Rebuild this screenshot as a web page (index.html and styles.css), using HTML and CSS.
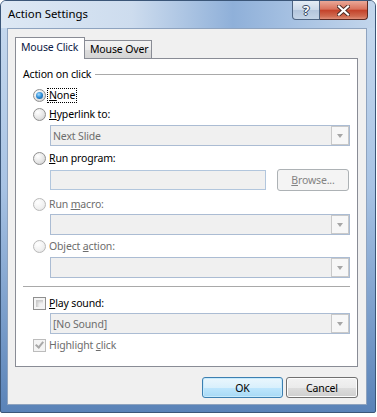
FILE: index.html
```html
<!DOCTYPE html>
<html lang="en">
<head>
    <meta charset="UTF-8">
    <title>Action Settings</title>
    <link rel="stylesheet" href="styles.css">
</head>
<body>
    <div class="window">
        <div class="titlebar">
            <span class="title">Action Settings</span>
            <div class="caption-btns">
                <span class="cap-btn help">?</span>
                <span class="cap-btn close">
                    <svg width="13" height="11" viewBox="0 0 13 11">
                        <path d="M2 1.5 L11 9.5 M11 1.5 L2 9.5" stroke="#4a2a24" stroke-width="4" stroke-linecap="square"/>
                        <path d="M2 1.5 L11 9.5 M11 1.5 L2 9.5" stroke="#fff" stroke-width="2.2" stroke-linecap="square"/>
                    </svg>
                </span>
            </div>
        </div>

        <div class="client">
            <div class="tabs">
                <span class="tab active">Mouse Click</span>
                <span class="tab">Mouse Over</span>
            </div>

            <div class="panel">
                <div class="group-title">
                    <span>Action on click</span>
                    <span class="rule"></span>
                </div>

                <div class="option opt-none">
                    <span class="radio checked"></span>
                    <span class="label focus"><u>N</u>one</span>
                </div>
                <div class="option opt-link">
                    <span class="radio"></span>
                    <span class="label"><u>H</u>yperlink to:</span>
                </div>
                <div class="combo combo-link">
                    <span class="combo-text">Next Slide</span>
                    <span class="combo-arrow"></span>
                </div>

                <div class="option opt-run">
                    <span class="radio"></span>
                    <span class="label"><u>R</u>un program:</span>
                </div>
                <div class="program-row">
                    <span class="textbox"></span>
                    <span class="browse"><u>B</u>rowse...</span>
                </div>

                <div class="option opt-macro disabled">
                    <span class="radio"></span>
                    <span class="label">Run <u>m</u>acro:</span>
                </div>
                <div class="combo combo-macro">
                    <span class="combo-text"></span>
                    <span class="combo-arrow"></span>
                </div>

                <div class="option opt-object disabled">
                    <span class="radio"></span>
                    <span class="label">Object <u>a</u>ction:</span>
                </div>
                <div class="combo combo-object">
                    <span class="combo-text"></span>
                    <span class="combo-arrow"></span>
                </div>

                <div class="separator"></div>

                <div class="option opt-sound">
                    <span class="checkbox"></span>
                    <span class="label"><u>P</u>lay sound:</span>
                </div>
                <div class="combo combo-sound">
                    <span class="combo-text">[No Sound]</span>
                    <span class="combo-arrow"></span>
                </div>

                <div class="option opt-highlight disabled">
                    <span class="checkbox checked"></span>
                    <span class="label">Highlight <u>c</u>lick</span>
                </div>
            </div>

            <div class="buttons">
                <span class="btn default">OK</span>
                <span class="btn cancel">Cancel</span>
            </div>
        </div>
    </div>
</body>
</html>
```

FILE: styles.css
```css
body {
    margin: 0;
    background: #fff;
    font-family: "Noto Sans", "DejaVu Sans", sans-serif;
    font-size: 10.5px;
    letter-spacing: -0.15px;
    color: #000;
}

.window {
    width: 374px;
    height: 411px;
    border: 1px solid #3b5678;
    border-radius: 6px 6px 2px 2px;
    background: linear-gradient(#c9dbef, #a8c3e4 45%, #5a83b8);
    display: flex;
    flex-direction: column;
}

.titlebar {
    height: 27px;
    display: flex;
    align-items: flex-start;
    background: linear-gradient(90deg, #dde8f4 0%, #cddcee 35%, #8fb0d9 62%, #a6c1e2 78%, #c3d6ec 100%);
    border-radius: 5px 5px 0 0;
}

.title {
    padding-left: 7px;
    margin-top: 5px;
    font-size: 11.4px;
    letter-spacing: 0;
    color: #000;
}

.caption-btns {
    margin-left: auto;
    margin-right: 7px;
    display: flex;
}

.cap-btn {
    height: 18px;
    display: flex;
    align-items: center;
    justify-content: center;
    border: 1px solid #4e6482;
    border-top: none;
}

.help {
    width: 26px;
    border-radius: 0 0 0 4px;
    background: linear-gradient(#e4ecf5, #cbd8e8 50%, #b3c5dc 51%, #c4d4e7);
    color: #fff;
    font-weight: bold;
    font-size: 13px;
    text-shadow: 0 0 1px #2d3c52, 1px 0 0 #3a4d68, -1px 0 0 #3a4d68, 0 1px 0 #3a4d68, 0 -1px 0 #3a4d68;
}

.close {
    width: 47px;
    border-left: none;
    border-color: #5c2a22;
    border-radius: 0 0 4px 0;
    background: linear-gradient(#eaa898, #d9735d 45%, #c4432b 52%, #cf6a50 85%, #e0907a);
}

.client {
    margin-left: 6px;
    width: 360px;
    height: 377px;
    box-sizing: border-box;
    border: 1px solid #8ea3bf;
    background: #f0f0f0;
    padding: 8px 8px 0 7px;
    display: flex;
    flex-direction: column;
}

.tabs {
    height: 21px;
    display: flex;
    align-items: flex-end;
}

.tab {
    box-sizing: border-box;
    border: 1px solid #898c95;
    border-bottom: none;
    padding-left: 5px;
    white-space: nowrap;
    color: #000;
}

.tab.active {
    width: 70px;
    height: 22px;
    margin-bottom: -1px;
    padding-top: 2px;
    background: #fff;
    position: relative;
    z-index: 1;
    color: #0c1a45;
}

.tab:not(.active) {
    width: 68px;
    height: 18px;
    margin-left: -1px;
    padding-top: 1px;
    background: linear-gradient(#f3f3f3, #ebebeb 50%, #dddddd 51%, #d5d5d5);
}

.panel {
    height: 309px;
    box-sizing: border-box;
    border: 1px solid #898c95;
    background: #fff;
    padding: 0 7px;
    display: flex;
    flex-direction: column;
}

.group-title {
    margin-top: 8px;
    height: 14px;
    display: flex;
    align-items: center;
}

.rule {
    flex: 1;
    height: 1px;
    margin-left: 4px;
    background: #a9a9a9;
}

.option {
    height: 16px;
    margin-left: 10px;
    display: flex;
    align-items: center;
}

.option .label {
    margin-left: 3px;
}

.option.disabled .label {
    color: #6d6d6d;
}

.focus {
    outline: 1px dotted #000;
    outline-offset: 0;
    padding: 0 1px;
    margin-left: 2px !important;
    line-height: 13px;
}

.opt-none { margin-top: 6px; }
.opt-link { margin-top: 3px; }
.combo-link { margin-top: 3px; }
.opt-run { margin-top: 4px; }
.program-row { margin-top: 3px; }
.opt-macro { margin-top: 5px; }
.combo-macro { margin-top: 2px; }
.opt-object { margin-top: 3px; }
.combo-object { margin-top: 3px; }
.opt-sound { margin-top: 8px; }
.combo-sound { margin-top: 2px; }
.opt-highlight { margin-top: 3px; }

.radio {
    width: 13px;
    height: 13px;
    box-sizing: border-box;
    border-radius: 50%;
    border: 1px solid #8f8f8f;
    background: radial-gradient(circle at 35% 30%, #ffffff, #e6e6e6 55%, #c9c9c9);
    display: flex;
    align-items: center;
    justify-content: center;
}

.radio.checked::after {
    content: "";
    width: 7px;
    height: 7px;
    border-radius: 50%;
    background: radial-gradient(circle at 40% 35%, #a5dcff, #2a8ad4 50%, #10508f);
}

.disabled .radio {
    border-color: #b9b9b9;
    background: radial-gradient(circle at 35% 30%, #ffffff, #f0f0f0 60%, #dcdcdc);
}

.checkbox {
    width: 13px;
    height: 13px;
    box-sizing: border-box;
    border: 1px solid #8f8f8f;
    background: #f4f4f4;
    box-shadow: inset 0 0 0 2px #f4f4f4, inset 2px 2px 3px 2px #c8c8c8;
    display: flex;
    align-items: center;
    justify-content: center;
}

.disabled .checkbox {
    border-color: #bcbcbc;
    box-shadow: none;
    background: #f4f4f4;
}

.checkbox.checked::after {
    content: "";
    width: 3px;
    height: 6px;
    margin-top: -2px;
    border: solid #a8a8a8;
    border-width: 0 2px 2px 0;
    transform: rotate(40deg);
}

.combo {
    margin-left: 27px;
    height: 21px;
    box-sizing: border-box;
    border: 1px solid #abbcd3;
    background: #f0f0f0;
    display: flex;
    align-items: center;
}

.combo-text {
    flex: 1;
    padding-left: 2px;
    color: #6d6d6d;
}

.combo-arrow {
    width: 18px;
    height: 19px;
    box-sizing: border-box;
    border: 1px solid #c9c9c9;
    background: #f7f7f7;
    display: flex;
    align-items: center;
    justify-content: center;
}

.combo-arrow::after {
    content: "";
    border-left: 3.5px solid transparent;
    border-right: 3.5px solid transparent;
    border-top: 4px solid #a6a6a6;
}

.program-row {
    height: 22px;
    margin-left: 27px;
    display: flex;
    align-items: center;
}

.textbox {
    width: 216px;
    height: 20px;
    box-sizing: border-box;
    border: 1px solid #b2c6dd;
    background: #f0f0f0;
}

.browse {
    width: 72px;
    height: 22px;
    margin-left: 11px;
    box-sizing: border-box;
    border: 1px solid #adb2b5;
    border-radius: 3px;
    background: #f4f4f4;
    color: #838383;
    display: flex;
    align-items: center;
    justify-content: center;
}

.separator {
    margin-top: 8px;
    height: 1px;
    background: #a9a9a9;
}

.buttons {
    margin-top: 10px;
    display: flex;
    justify-content: flex-end;
    gap: 3px;
}

.btn {
    height: 21px;
    box-sizing: border-box;
    border-radius: 3px;
    display: flex;
    align-items: center;
    justify-content: center;
}

.btn.default {
    width: 81px;
    border: 1px solid #3c7fb1;
    background: linear-gradient(#eaf6fd, #d9f0fc 50%, #bee6fd 51%, #a7d9f5);
    box-shadow: inset 0 0 0 1px #c6eafc;
}

.btn.cancel {
    width: 72px;
    border: 1px solid #707070;
    background: linear-gradient(#f2f2f2, #ebebeb 50%, #dddddd 51%, #cfcfcf);
    box-shadow: inset 0 0 0 1px #fcfcfc;
}
```
